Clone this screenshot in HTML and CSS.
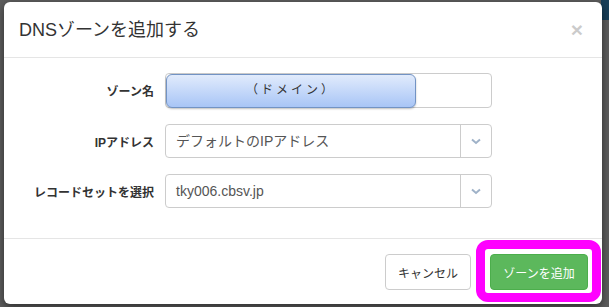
FILE: index.html
```html
<!DOCTYPE html>
<html lang="ja">
<head>
    <meta charset="UTF-8">
    <meta name="viewport" content="width=device-width, initial-scale=1.0">
    <link rel="stylesheet" href="styles.css">
    <title>DNSゾーンを追加する</title>
</head>
<body>
    <div class="backdrop">
        <div class="navbar-edge"></div>
        <div class="modal">
            <div class="modal-header">
                <h4 class="modal-title">DNSゾーンを追加する</h4>
                <button class="close">&times;</button>
            </div>
            <div class="modal-body">
                <div class="form-row">
                    <label>ゾーン名</label>
                    <div class="field">
                        <input type="text" class="form-control">
                        <div class="domain-tag">（ドメイン）</div>
                    </div>
                </div>
                <div class="form-row">
                    <label>IPアドレス</label>
                    <div class="select-box">
                        <span class="select-value">デフォルトのIPアドレス</span>
                        <span class="select-arrow">
                            <svg width="10" height="7" viewBox="0 0 10 7"><path d="M1 1.5 L5 5 L9 1.5" fill="none" stroke="#9fb2c8" stroke-width="2"/></svg>
                        </span>
                    </div>
                </div>
                <div class="form-row">
                    <label>レコードセットを選択</label>
                    <div class="select-box">
                        <span class="select-value">tky006.cbsv.jp</span>
                        <span class="select-arrow">
                            <svg width="10" height="7" viewBox="0 0 10 7"><path d="M1 1.5 L5 5 L9 1.5" fill="none" stroke="#9fb2c8" stroke-width="2"/></svg>
                        </span>
                    </div>
                </div>
            </div>
            <div class="modal-footer">
                <button class="btn btn-default">キャンセル</button>
                <button class="btn btn-success highlight">ゾーンを追加</button>
            </div>
        </div>
    </div>
</body>
</html>
```

FILE: styles.css
```css
html, body {
    margin: 0;
    height: 100%;
}

body {
    background: #5d5d5d;
    font-family: "Liberation Sans", "Noto Sans CJK JP", sans-serif;
    color: #333;
}

.backdrop {
    position: relative;
    padding: 2px 7px 4px 4px;
}

.navbar-edge {
    position: absolute;
    top: 0;
    right: 0;
    width: 8px;
    height: 20px;
    background: #173e58;
}

.modal {
    position: relative;
    width: 598px;
    background: #fff;
    border-radius: 6px;
    box-shadow: 0 3px 9px rgba(0, 0, 0, 0.5);
}

.modal-header {
    display: flex;
    align-items: center;
    justify-content: space-between;
    padding: 15px 15px 14px 15px;
    border-bottom: 1px solid #e5e5e5;
}

.modal-title {
    margin: 0;
    font-size: 18px;
    font-weight: normal;
    line-height: 26px;
    color: #333;
}

.close {
    border: 0;
    background: none;
    padding: 0 4px 2px 0;
    font-family: "Liberation Sans", sans-serif;
    font-size: 21px;
    font-weight: bold;
    line-height: 1;
    color: #000;
    opacity: 0.2;
}

.modal-body {
    padding: 15px 15px 14px 15px;
}

.form-row {
    display: grid;
    grid-template-columns: 135px 327px;
    column-gap: 11px;
    align-items: center;
    margin-bottom: 16px;
}

.form-row label {
    text-align: right;
    font-size: 12px;
    font-weight: bold;
    color: #333;
}

.field {
    position: relative;
}

.form-control {
    display: block;
    box-sizing: border-box;
    width: 100%;
    height: 35px;
    margin: 0;
    border: 1px solid #ccc;
    border-radius: 4px;
    background: #fff;
}

.domain-tag {
    position: absolute;
    top: 1px;
    left: 1px;
    width: 250px;
    height: 34px;
    box-sizing: border-box;
    border: 1px solid #7293c4;
    border-radius: 6px;
    background: linear-gradient(#e1ebfc, #a8c5f6);
    box-shadow: 0 1px 2px rgba(0, 0, 0, 0.25);
    text-align: center;
    line-height: 31px;
    font-size: 12px;
    letter-spacing: 3px;
    color: #333;
}

.select-box {
    display: flex;
    box-sizing: border-box;
    height: 34px;
    border: 1px solid #ccc;
    border-radius: 4px;
    background: #fff;
}

.select-value {
    flex: 1;
    padding-left: 10px;
    line-height: 32px;
    font-size: 14px;
    color: #555;
}

.select-arrow {
    display: flex;
    align-items: center;
    justify-content: center;
    width: 30px;
    border-left: 1px solid #ccc;
}

.modal-footer {
    display: flex;
    justify-content: flex-end;
    gap: 19px;
    padding: 15px 14px 14px 15px;
    border-top: 1px solid #e5e5e5;
}

.btn {
    height: 36px;
    padding: 0;
    border: 1px solid #ccc;
    border-radius: 4px;
    font-family: "Noto Sans CJK JP", sans-serif;
    font-size: 12px;
    white-space: nowrap;
}

.btn-default {
    width: 86px;
    background: #fff;
    color: #333;
}

.btn-success {
    width: 98px;
    background: #5cb85c;
    border-color: #4cae4c;
    color: #fff;
}

.highlight {
    position: relative;
}

.highlight::after {
    content: "";
    position: absolute;
    top: -15px;
    left: -15px;
    right: -14px;
    bottom: -13px;
    border: 9px solid #ff00ff;
    border-radius: 12px;
}
```
